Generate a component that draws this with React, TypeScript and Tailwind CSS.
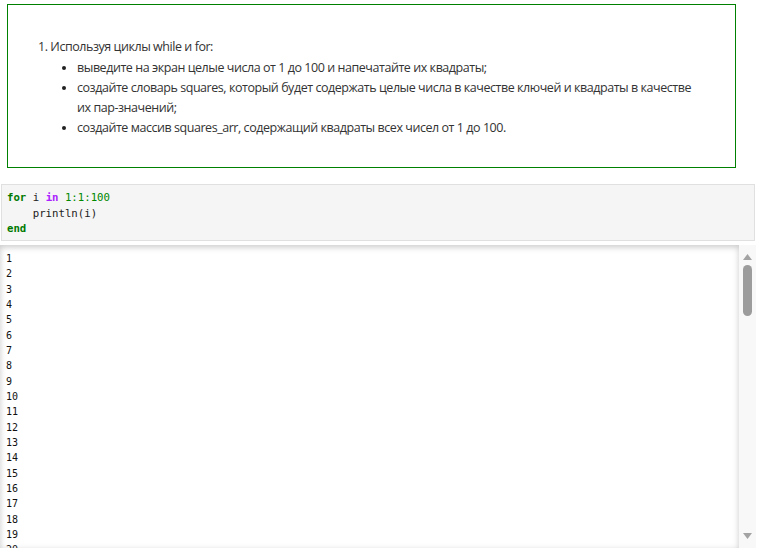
import React from "react";

const tasks = [
  "выведите на экран целые числа от 1 до 100 и напечатайте их квадраты;",
  "создайте словарь squares, который будет содержать целые числа в качестве ключей и квадраты в качестве их пар-значений;",
  "создайте массив squares_arr, содержащий квадраты всех чисел от 1 до 100.",
];

const numbers = Array.from({ length: 21 }, (_, i) => i + 1);

const ScrollBar: React.FC = () => (
  <div className="w-[17px] shrink-0 bg-[#f8f8f8] flex flex-col items-center">
    <svg width="9" height="6" viewBox="0 0 9 6" className="mt-[9px]">
      <path d="M4.5 0 L9 6 L0 6 Z" fill="#a3a3a3" />
    </svg>
    <div className="mt-[5px] w-[9px] h-[51px] rounded-full bg-[#9c9c9c]" />
    <div className="flex-1" />
    <svg width="9" height="6" viewBox="0 0 9 6" className="mb-[9px]">
      <path d="M0 0 L9 0 L4.5 6 Z" fill="#a3a3a3" />
    </svg>
  </div>
);

export default function App() {
  return (
    <div className="w-[757px] h-[553px] bg-white overflow-hidden font-['Open_Sans','Noto_Sans',sans-serif] text-[#333]">
      {/* задание */}
      <div className="ml-[7px] mt-[4px] w-[729px] h-[164px] border border-[#008000] pt-[32px] pl-[30px] pr-[30px]">
        <ol className="text-[12.5px] leading-[20px] tracking-[-0.45px]">
          <li>
            <span>1. Используя циклы while и for:</span>
            <ul className="mt-[1px] pl-[39px] list-disc">
              {tasks.map((t) => (
                <li key={t} className="marker:text-[#222]">
                  {t}
                </li>
              ))}
            </ul>
          </li>
        </ol>
      </div>

      {/* ячейка кода */}
      <div className="mt-[16px] ml-[1px] w-[754px] h-[57px] bg-[#f5f5f5] border border-[#e0e0e0] pt-[5px] pl-[5px] font-['DejaVu_Sans_Mono',monospace] text-[10.7px] leading-[15.5px] whitespace-pre">
        <div>
          <span className="text-[#007a00] font-bold">for</span>
          <span className="text-[#222]"> i </span>
          <span className="text-[#aa22ff] font-bold">in</span>
          <span className="text-[#008800]"> 1:1:100</span>
        </div>
        <div className="text-[#222]">{"    println(i)"}</div>
        <div className="text-[#007a00] font-bold">end</div>
      </div>

      {/* вывод */}
      <div className="mt-[4px] flex h-[303px]">
        <div className="w-[739px] h-full overflow-hidden shadow-[inset_0_2px_6px_rgba(0,0,0,0.22)] pt-[6px] pl-[6px] font-['DejaVu_Sans_Mono',monospace] text-[10px] leading-[15.33px] text-[#111]">
          {numbers.map((n) => (
            <div key={n}>{n}</div>
          ))}
        </div>
        <ScrollBar />
      </div>
    </div>
  );
}
